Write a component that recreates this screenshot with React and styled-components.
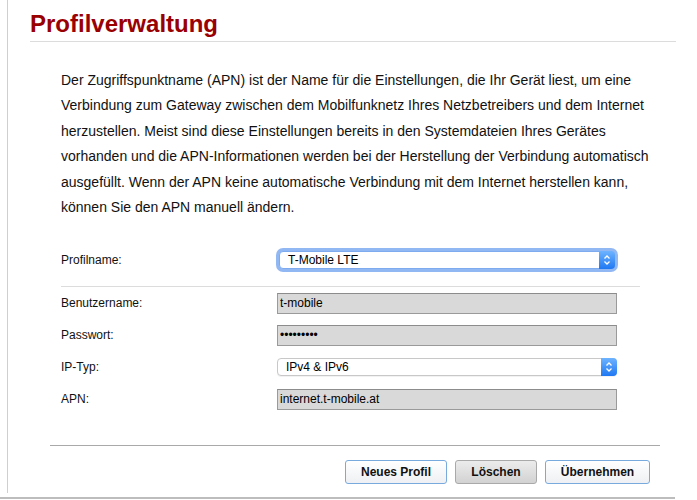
import React from 'react'
import styled, {createGlobalStyle} from 'styled-components'

const GlobalStyle = createGlobalStyle`
  html, body {
    margin: 0;
    padding: 0;
    background: #fff;
  }
  body {
    font-family: 'Liberation Sans', Arial, sans-serif;
    color: #000;
  }
`

const Page = styled.div`
  width: 697px;
  height: 500px;
  overflow: hidden;
  display: flex;
  flex-direction: column;
`

const Frame = styled.div`
  margin-left: 7px;
  height: 493px;
  border-left: 1px solid #cfcfcf;
  padding: 0 21px 0 22px;
  box-sizing: border-box;
`

const Title = styled.h1`
  margin: 0;
  padding: 10px 0 4px;
  font-size: 24px;
  line-height: 27px;
  font-weight: bold;
  color: #990000;
  border-bottom: 1px solid #dcdcdc;
`

const Content = styled.div`
  padding-left: 31px;
`

const Intro = styled.p`
  margin: 26px 0 0;
  width: 598px;
  font-size: 14px;
  line-height: 25.4px;
  color: #111;
`

const Form = styled.div`
  margin-top: 24px;
  width: 579px;
`

const Row = styled.div`
  display: grid;
  grid-template-columns: 216px 340px;
  align-items: center;
  height: 32px;
`

const Label = styled.span`
  font-size: 12px;
  color: #111;
`

const Divider = styled.div`
  margin-top: 10px;
  height: 1px;
  background: #dcdcdc;
`

const Field = styled.input`
  box-sizing: border-box;
  width: 340px;
  height: 21px;
  margin: 0;
  padding: 0 2px;
  border: 1px solid #9a9a9a;
  border-top-color: #8c8c8c;
  background: #d9d9d9;
  font-family: 'Liberation Sans', Arial, sans-serif;
  font-size: 12px;
  color: #000;
  outline: none;
`

const SelectBox = styled.div`
  position: relative;
  box-sizing: border-box;
  width: ${p => (p.$focused ? '336px' : '340px')};
  margin-left: ${p => (p.$focused ? '2px' : '0')};
  height: 18px;
  display: flex;
  align-items: center;
  padding-left: 8px;
  border: 1px solid ${p => (p.$focused ? '#7eaaf0' : '#c8c8c8')};
  border-radius: 4px;
  background: #fff;
  font-size: 12px;
  color: #000;
  box-shadow: ${p => (p.$focused ? '0 0 0 3px rgba(110, 160, 240, 0.75)' : '0 1px 0 rgba(0,0,0,0.05)')};
`

const Stepper = styled.span`
  position: absolute;
  top: -1px;
  right: -1px;
  bottom: -1px;
  width: 16px;
  border-radius: 0 4px 4px 0;
  background: linear-gradient(#6db3ff, #1f78f2);
  display: flex;
  align-items: center;
  justify-content: center;
`

const FooterLine = styled.div`
  margin: 30px 0 0 20px;
  width: 610px;
  height: 1px;
  background: #a9a9a9;
`

const ButtonBar = styled.div`
  margin-top: 14px;
  width: 620px;
  display: flex;
  justify-content: flex-end;
  gap: 8px;
`

const Button = styled.button`
  box-sizing: border-box;
  width: ${p => p.$w}px;
  height: 24px;
  margin: 0;
  padding: 0;
  border-radius: 3px;
  border: 1px solid ${p => (p.$muted ? '#a9a9a9' : '#78aade')};
  background: ${p =>
    p.$muted ? 'linear-gradient(#ececec, #d2d2d2)' : 'linear-gradient(#ffffff, #eef0f3)'};
  font-family: 'Liberation Sans', Arial, sans-serif;
  font-size: 12px;
  font-weight: bold;
  color: #111;
`

const BottomLine = styled.div`
  margin-top: 4px;
  width: 675px;
  height: 2px;
  background: #bdbdbd;
`

const Chevrons = () => (
  <svg width="8" height="12" viewBox="0 0 8 12">
    <path d="M1.5 4.5 L4 2 L6.5 4.5 M1.5 7.5 L4 10 L6.5 7.5" fill="none" stroke="#fff" strokeWidth="1.3" />
  </svg>
)

const Select = ({value, focused}) => (
  <SelectBox $focused={focused}>
    {value}
    <Stepper>
      <Chevrons />
    </Stepper>
  </SelectBox>
)

const App = () => (
  <>
    <GlobalStyle />
    <Page>
      <Frame>
        <Title>Profilverwaltung</Title>
        <Content>
          <Intro>
            Der Zugriffspunktname (APN) ist der Name für die Einstellungen, die Ihr Gerät liest, um eine
            Verbindung zum Gateway zwischen dem Mobilfunknetz Ihres Netzbetreibers und dem Internet
            herzustellen. Meist sind diese Einstellungen bereits in den Systemdateien Ihres Gerätes
            vorhanden und die APN-Informationen werden bei der Herstellung der Verbindung automatisch
            ausgefüllt. Wenn der APN keine automatische Verbindung mit dem Internet herstellen kann,
            können Sie den APN manuell ändern.
          </Intro>
          <Form>
            <Row>
              <Label>Profilname:</Label>
              <Select value="T-Mobile LTE" focused />
            </Row>
            <Divider />
            <Row>
              <Label>Benutzername:</Label>
              <Field readOnly defaultValue="t-mobile" />
            </Row>
            <Row>
              <Label>Passwort:</Label>
              <Field readOnly type="password" defaultValue="tmobile01" />
            </Row>
            <Row>
              <Label>IP-Typ:</Label>
              <Select value="IPv4 & IPv6" />
            </Row>
            <Row>
              <Label>APN:</Label>
              <Field readOnly defaultValue="internet.t-mobile.at" />
            </Row>
          </Form>
        </Content>
        <FooterLine />
        <ButtonBar>
          <Button $w={102}>Neues Profil</Button>
          <Button $w={82} $muted>Löschen</Button>
          <Button $w={105}>Übernehmen</Button>
        </ButtonBar>
      </Frame>
      <BottomLine />
    </Page>
  </>
)

export default App
